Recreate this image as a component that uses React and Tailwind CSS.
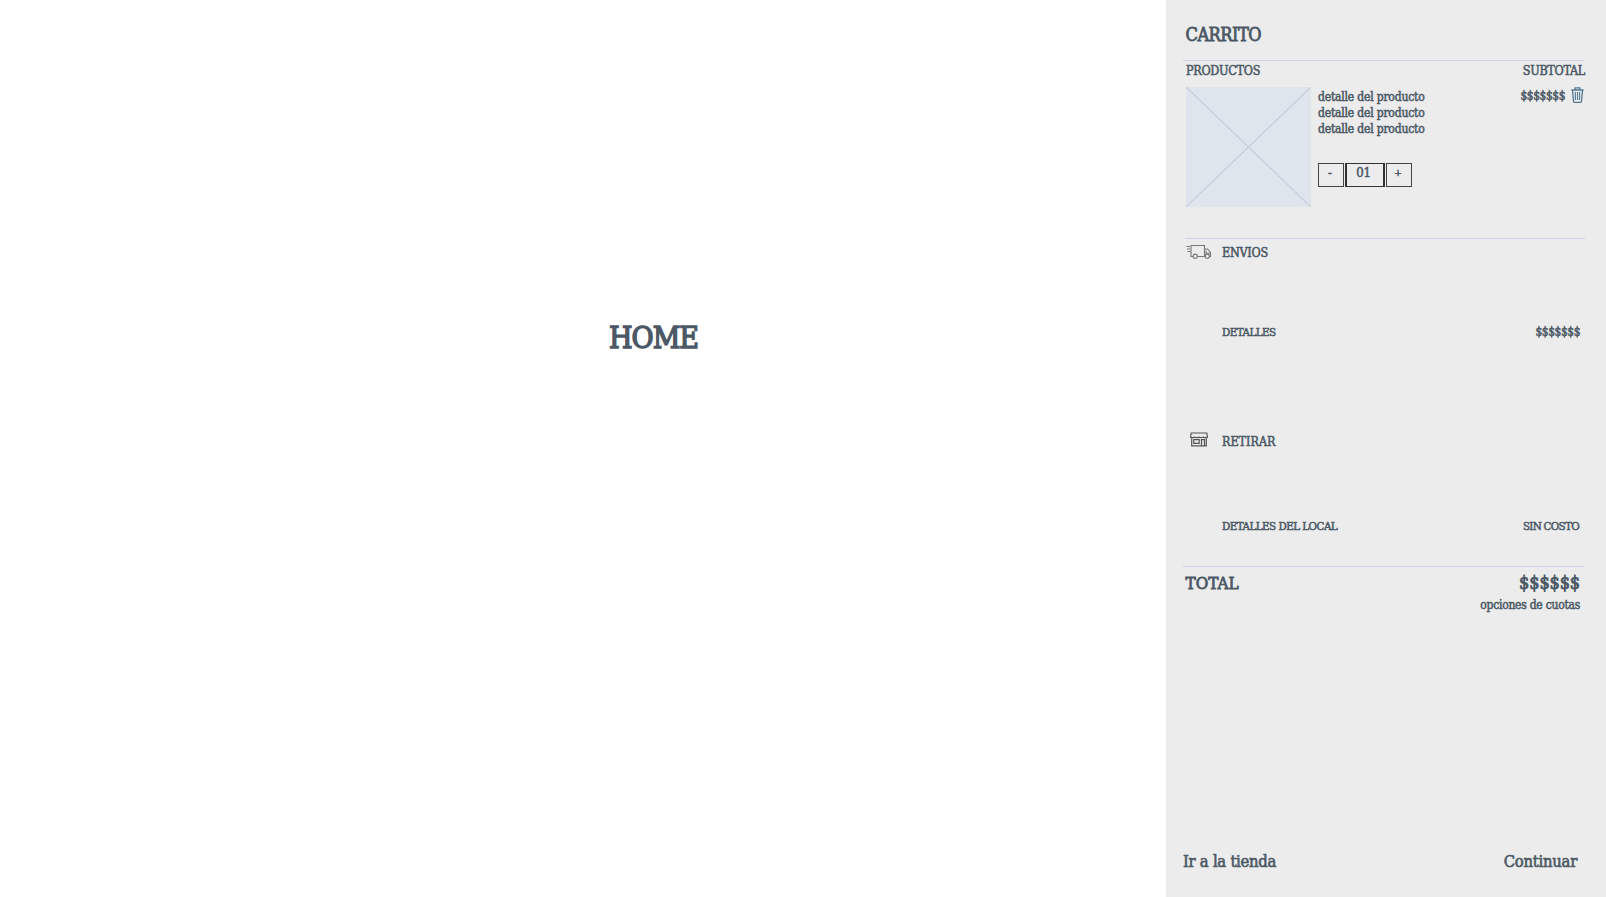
function TruckIcon() {
  return (
    <svg width="26" height="16" viewBox="0 0 26 16" fill="none" stroke="#777" strokeWidth="1.1">
      <path d="M.5 2.500h3.500M1 5h3M1.500 7.500h2.500" />
      <path d="M7 12.500H5V1.500h13.500v11h-7" />
      <path d="M18.500 5h3l3 3.500v4h-1.200M18.500 12.500h.8M20 6.500v2.800h4.200" />
      <circle cx="9.2" cy="12.2" r="2.100" />
      <circle cx="21.300" cy="12.200" r="2.100" />
    </svg>
  );
}

function StoreIcon() {
  return (
    <svg width="18" height="15" viewBox="0 0 18 15" fill="none" stroke="#555" strokeWidth="1.2">
      <path d="M1.2 1h15.600l.5 3.200v1.300H.7V4.200z" />
      <path d="M.7 4.600c1 1.700 2.900 1.700 4.100 0c1.200 1.700 3 1.700 4.200 0c1.200 1.700 3 1.700 4.200 0c1.200 1.700 3.100 1.700 4.100 0" strokeWidth=".8" />
      <path d="M1.700 6.200V13.900H16.300V6.200" />
      <path d="M3.800 7.700h5.400v3.700H3.800zM11.500 13.900V7.700h3v6.200" />
    </svg>
  );
}

function TrashIcon() {
  return (
    <svg width="13" height="16" viewBox="0 0 13 16" fill="none" stroke="#527791" strokeWidth="1.3">
      <path d="M.4 3h12.200M4.200 2.800V.8h4.600v2" />
      <path d="M1.500 3.200l1 11.200q.1.900 1 .900h6q.900 0 1-.900l1-11.200" />
      <path d="M4.400 5v8M6.500 5v8M8.600 5v8" strokeWidth="1.100" />
    </svg>
  );
}

export default function App() {
  return (
    <div className="flex h-[897px] w-[1606px] overflow-hidden bg-white font-['DejaVu_Serif_Condensed','DejaVu_Serif',serif] whitespace-nowrap text-[#4b5865] [-webkit-text-stroke:0.5px_#4b5865]">
      <main className="flex w-[1166px] shrink-0 justify-center pt-[318px] pl-[141px]">
        <h1 className="text-[30px] leading-[40px] tracking-[-1px] [-webkit-text-stroke:1.4px_#4b5865]">HOME</h1>
      </main>

      <aside className="flex w-[440px] shrink-0 flex-col bg-[#ececec] pr-[22px] pl-[17px]">
        <header className="h-[60px] pt-[23px] pl-[2.5px]">
          <h2 className="text-[18px] leading-6 tracking-[-0.49px] [-webkit-text-stroke:0.8px_#4b5865]">CARRITO</h2>
        </header>
        <hr className="border-[#d3cdf0]" />

        <section className="h-[177px] pl-[3px]">
          <div className="flex justify-between text-[12.5px] leading-5 tracking-[-0.3px]">
            <h3>PRODUCTOS</h3>
            <h3 className="-mr-px">SUBTOTAL</h3>
          </div>
          <div className="mt-1.5 flex">
            <svg className="h-[120px] w-[125px] bg-[#dee5ed]" viewBox="0 0 125 120" stroke="#c5cddb" strokeWidth="1.2">
              <path d="M0 0L125 120M125 0L0 120" />
            </svg>
            <div className="ml-[7px] flex-1 pt-[1.5px]">
              <div className="text-[12px] leading-[16.4px] tracking-[-0.19px]">
                <p>detalle del producto</p>
                <p>detalle del producto</p>
                <p>detalle del producto</p>
              </div>
              <div className="mt-[25px] flex gap-px text-[13px] leading-[18px]">
                <button className="h-[24px] w-[26px] border-[1.5px] border-[#444] pr-0.5 pb-1">-</button>
                <span className="h-[24px] w-[40px] border border-x-2 border-[#333] pr-[3px] text-center tracking-[-0.3px]">01</span>
                <button className="h-[24px] w-[26px] border-[1.5px] border-[#444] pr-0.5 pb-1 text-[10px]">+</button>
              </div>
            </div>
            <div className="flex h-5 gap-1.5">
              <span className="text-[12px] leading-[18px] tracking-[-0.51px]">$$$$$$$</span>
              <TrashIcon />
            </div>
          </div>
        </section>
        <hr className="-mr-px ml-0.5 border-[#d3cdf0]" />

        <section className="pt-1 pl-[3px]">
          <div className="flex">
            <div className="w-9 pt-px"><TruckIcon /></div>
            <h3 className="text-[12.5px] leading-5 tracking-[-0.27px]">ENVIOS</h3>
          </div>
          <div className="mt-[59px] mb-px flex justify-between pr-1 pl-9 leading-5">
            <span className="text-[11.5px] tracking-[-0.55px]">DETALLES</span>
            <span className="text-[12px] tracking-[-0.51px]">$$$$$$$</span>
          </div>
        </section>

        <section className="pt-[88px] pl-[3px]">
          <div className="flex">
            <div className="w-9 pt-px pl-1"><StoreIcon /></div>
            <h3 className="pt-px text-[12.5px] leading-5 tracking-[-0.03px]">RETIRAR</h3>
          </div>
          <div className="mt-16 mb-px flex justify-between pr-[5px] pl-9 text-[11.5px] leading-5">
            <span className="tracking-[-0.54px]">DETALLES DEL LOCAL</span>
            <span className="tracking-[-0.7px]">SIN COSTO</span>
          </div>
        </section>
        <hr className="mt-[29px] border-[#d3cdf0]" />

        <section className="flex justify-between pt-1 pr-1 pl-[2.5px]">
          <h3 className="text-[17px] leading-6 [-webkit-text-stroke:0.8px_#4b5865]">TOTAL</h3>
          <div className="text-right">
            <p className="text-[18px] leading-6 tracking-[-0.15px] [-webkit-text-stroke:0.8px_#4b5865]">$$$$$$</p>
            <p className="mt-px text-[12px] leading-[18px] tracking-[-0.25px]">opciones de cuotas</p>
          </div>
        </section>

        <footer className="mt-auto flex justify-between pr-[7px] pb-[23px] text-[16.5px] leading-6 tracking-[-0.27px] [-webkit-text-stroke:0.6px_#4b5865]">
          <button>Ir a la tienda</button>
          <button>Continuar</button>
        </footer>
      </aside>
    </div>
  );
}
